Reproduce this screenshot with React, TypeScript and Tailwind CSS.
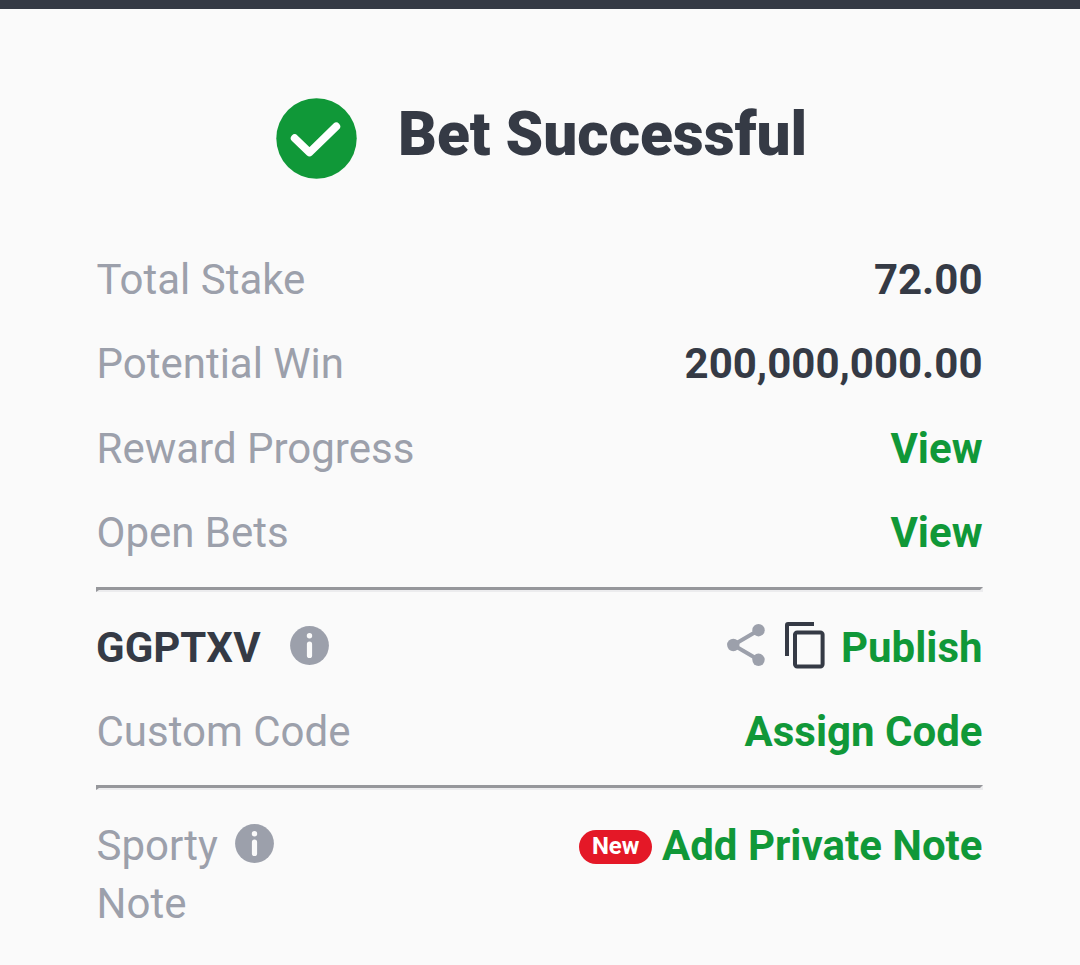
const InfoIcon = () => (
  <svg className="mb-1.5 size-[39px] shrink-0" viewBox="0 0 39 39">
    <circle cx="19.5" cy="19.5" r="19.4" fill="#9ca0ab" />
    <circle cx="19.5" cy="9.7" r="2.7" fill="#fafafa" />
    <rect x="16.9" y="15.5" width="5.2" height="16.5" rx="2.6" fill="#fafafa" />
  </svg>
);

const ShareIcon = () => (
  <svg className="mb-1.5 h-[42px] w-[38px] shrink-0" viewBox="0 0 38 42">
    <path d="M31.5 6.2 6.3 21l25.2 14.8" fill="none" stroke="#9ca0ab" strokeWidth="4" />
    <circle cx="31.5" cy="6.2" r="6.2" fill="#9ca0ab" />
    <circle cx="6.3" cy="21" r="6.2" fill="#9ca0ab" />
    <circle cx="31.5" cy="35.8" r="6.2" fill="#9ca0ab" />
  </svg>
);

const CopyIcon = () => (
  <svg className="mb-1.5 h-[47px] w-10 shrink-0" viewBox="0 0 40 47">
    <path d="M0 34V3q0-3 3-3h26v4H4v30z" fill="#353a45" />
    <rect x="10" y="10.4" width="27.6" height="34" rx="2.2" fill="none" stroke="#353a45" strokeWidth="4" />
  </svg>
);

const rows = [
  { label: "Total Stake", value: "72.00", link: false },
  { label: "Potential Win", value: "200,000,000.00", link: false },
  { label: "Reward Progress", value: "View", link: true },
  { label: "Open Bets", value: "View", link: true },
];

const Divider = () => (
  <div className="border-[3px] border-b-2 border-t-[#96979b] border-r-[#ececee] border-b-[#ececee] border-l-[#96979b]" />
);

const App = () => {
  return (
    <div className="h-[965px] w-full overflow-hidden border-t-[9px] border-[#353a45] bg-[#fafafa] font-['Roboto',sans-serif] text-[42px] leading-[58px] text-[#9ca0ab]">
      <div className="flex h-[229px] items-start gap-[41px] pt-[89px] pl-[276px]">
        <svg className="size-[81px] shrink-0" viewBox="0 0 81 81">
          <circle cx="40.5" cy="40.5" r="40.2" fill="#109838" />
          <path d="M18.7 40.2 33.5 54.5 60.3 28.4" fill="none" stroke="#fff" strokeWidth="7.8" strokeLinecap="round" strokeLinejoin="round" />
        </svg>
        <h1 className="mt-2 text-[60.3px] font-black text-[#353a45]">Bet Successful</h1>
      </div>

      <div className="pr-[97px] pl-24">
        {rows.map((row) => (
          <div key={row.label} className="flex h-[84.25px] items-center justify-between pr-[0.5px] pl-[0.5px]">
            <span>{row.label}</span>
            <span className={row.link ? "font-bold text-[#109838]" : "font-bold text-[#353a45]"}>
              {row.value}
            </span>
          </div>
        ))}

        <div className="pt-3 pb-3.5">
          <Divider />
        </div>

        <div className="flex h-[84.5px] items-center justify-between pr-[0.5px]">
          <div className="flex items-center gap-[29px]">
            <span className="font-bold text-[#353a45]">GGPTXV</span>
            <InfoIcon />
          </div>
          <div className="flex items-center">
            <ShareIcon />
            <div className="mr-4 ml-5">
              <CopyIcon />
            </div>
            <span className="font-bold text-[#109838]">Publish</span>
          </div>
        </div>
        <div className="flex h-[83px] items-center justify-between pr-[0.5px] pl-[0.5px]">
          <span>Custom Code</span>
          <span className="font-bold text-[#109838]">Assign Code</span>
        </div>

        <div className="pt-[11.5px] pb-[27px]">
          <Divider />
        </div>

        <div className="flex items-start justify-between pr-[0.5px] pl-[0.5px]">
          <div>
            <div className="flex items-center gap-[17.5px]">
              <span>Sporty</span>
              <InfoIcon />
            </div>
            <div>Note</div>
          </div>
          <div className="flex items-center gap-2.5">
            <span className="mt-0.5 h-[34px] rounded-full bg-[#e41827] px-[12.5px] text-[24px] leading-8 font-bold text-white">New</span>
            <span className="font-bold text-[#109838]">Add Private Note</span>
          </div>
        </div>
      </div>
    </div>
  );
};

export default App;
